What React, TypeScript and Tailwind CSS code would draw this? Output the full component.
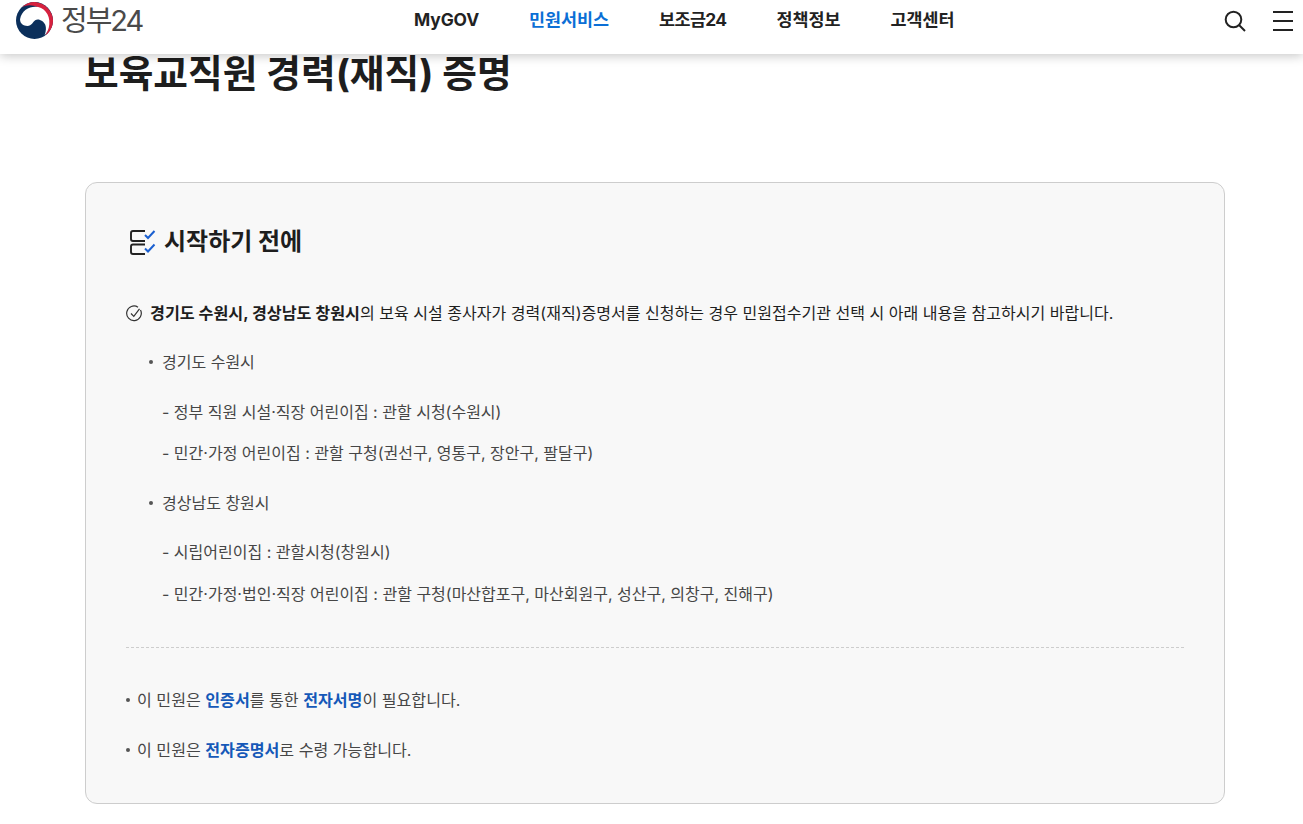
const font = { fontFamily: 'Inter, "Noto Sans CJK KR", sans-serif' };

function Logo() {
  return (
    <svg width="37" height="37" viewBox="18 4 110 110" className="shrink-0">
      <circle cx="73" cy="59" r="55" fill="#0b2f5b" />
      <path d="M35 20C50 6 70 1 85 6C110 12 128 35 128 59C128 78 118 95 105 103C122 80 118 35 85 20C65 12 50 12 35 20Z" fill="#d6213e" />
      <path d="M30 55C35 30 55 18 75 18C100 18 120 40 117 70C116 85 110 95 103 103C108 90 108 80 105 72C100 60 85 52 75 58C68 63 65 75 52 75C40 75 30 68 30 55Z" fill="#fff" />
    </svg>
  );
}

function ChecklistIcon() {
  return (
    <svg width="28" height="26" viewBox="0 0 28 26" fill="none" className="shrink-0">
      <path d="M16 2H4a2 2 0 0 0-2 2V10a2 2 0 0 0 2 2H16" stroke="#222" strokeWidth="1.900" />
      <path d="M16 15.500H4a2 2 0 0 0-2 2V23a2 2 0 0 0 2 2H16" stroke="#222" strokeWidth="1.900" />
      <path d="M16 6L19 9L25.500 2" stroke="#1a5fd0" strokeWidth="2" />
      <path d="M16 19.500L19 22.500L25.500 15.500" stroke="#1a5fd0" strokeWidth="2" />
    </svg>
  );
}

function CircleCheck() {
  return (
    <svg width="17" height="17" viewBox="0 0 17 17" fill="none" className="shrink-0">
      <path d="M14.500 5A7.300 7.300 0 1 1 12 2.200" stroke="#333" strokeWidth="1.200" />
      <path d="M5 8.500L7.800 11.300L13.500 3.800" stroke="#333" strokeWidth="1.200" />
    </svg>
  );
}

function Sub({ children }: { children: React.ReactNode }) {
  return <p className="h-[41px] pl-[36px] text-[16px] leading-[41px] text-[#464646]">- {children}</p>;
}

function Group({ children, gap }: { children: React.ReactNode; gap: string }) {
  return (
    <p className={`flex h-[50px] items-center pl-[23px] text-[16px] text-[#464646] ${gap}`}>
      <span className="mr-[9px] h-[4px] w-[4px] rounded-full bg-[#555]" />
      {children}
    </p>
  );
}

function Note({ children }: { children: React.ReactNode }) {
  return (
    <p className="flex h-[50px] items-center text-[16.100px] text-[#464646]">
      <span className="mr-[7px] h-[4px] w-[4px] rounded-full bg-[#555]" />
      <span>{children}</span>
    </p>
  );
}

export default function App() {
  return (
    <div className="relative h-[824px] overflow-hidden bg-white" style={font}>
      <header className="absolute inset-x-0 top-0 z-10 flex h-[54px] items-start bg-white shadow-[0_2px_10px_rgba(0,0,0,0.22)]">
        <div className="flex items-center gap-[8px] pl-[16px] pt-[2px]">
          <Logo />
          <span className="text-[29px] leading-[36px] tracking-[-2px] text-[#4a4a4a]">정부24</span>
        </div>
        <nav className="absolute left-[414px] top-[8px] flex gap-[50px] text-[17.400px] font-bold leading-[24px] text-[#222]">
          <span className="tracking-[-0.1px]">MyGOV</span>
          <span className="text-[#0b6fd6]">민원서비스</span>
          <span className="tracking-[-0.6px]">보조금24</span>
          <span>정책정보</span>
          <span>고객센터</span>
        </nav>
        <div className="ml-auto flex items-center gap-[26px] pr-[10px] pt-[9px]">
          <svg width="24" height="24" viewBox="0 0 24 24" fill="none" stroke="#222" strokeWidth="2">
            <circle cx="10.500" cy="10.500" r="7.800" />
            <path d="M16 16l6 6" />
          </svg>
          <div className="flex w-[20px] flex-col gap-[7px]">
            <span className="h-[2px] bg-[#222]" />
            <span className="h-[2px] bg-[#222]" />
            <span className="h-[2px] bg-[#222]" />
          </div>
        </div>
      </header>

      <main className="ml-[85px] w-[1140px] pt-[45px]">
        <h1 className="ml-[-1px] h-[137px] text-[37.700px] font-bold leading-[56px] text-[#1e1e1e]">보육교직원 경력(재직) 증명</h1>
        <section className="h-[622px] rounded-[12px] border border-[#cdcdcd] bg-[#f8f8f8] px-[40px] pt-[40px]">
          <h2 className="flex h-[38px] items-center gap-[7px] pl-[3px] text-[24px] font-bold text-[#1e1e1e]">
            <ChecklistIcon />
            시작하기 전에
          </h2>
          <p className="mt-[37px] flex h-[30px] items-center gap-[7px] text-[16.050px] text-[#1e1e1e]">
            <CircleCheck />
            <span>
              <b className="text-[16.200px]">경기도 수원시, 경상남도 창원시</b>의 보육 시설 종사자가 경력(재직)증명서를 신청하는 경우 민원접수기관 선택 시 아래 내용을 참고하시기 바랍니다.
            </span>
          </p>
          <div className="mt-[9px]">
            <Group gap="mb-[5px]">경기도 수원시</Group>
            <Sub>정부 직원 시설·직장 어린이집 : 관할 시청(수원시)</Sub>
            <Sub>민간·가정 어린이집 : 관할 구청(권선구, 영통구, 장안구, 팔달구)</Sub>
            <div className="h-[4px]" />
            <Group gap="mb-[4px]">경상남도 창원시</Group>
            <Sub>시립어린이집 : 관할시청(창원시)</Sub>
            <div className="h-[1px]" />
            <Sub>민간·가정·법인·직장 어린이집 : 관할 구청(마산합포구, 마산회원구, 성산구, 의창구, 진해구)</Sub>
          </div>
          <div className="mt-[32px] border-t border-dashed border-[#cdcdcd]" />
          <div className="mt-[27px]">
            <Note>
              이 민원은 <b className="text-[#1558b8]">인증서</b>를 통한 <b className="text-[#1558b8]">전자서명</b>이 필요합니다.
            </Note>
            <Note>
              이 민원은 <b className="text-[#1558b8]">전자증명서</b>로 수령 가능합니다.
            </Note>
          </div>
        </section>
      </main>
    </div>
  );
}
